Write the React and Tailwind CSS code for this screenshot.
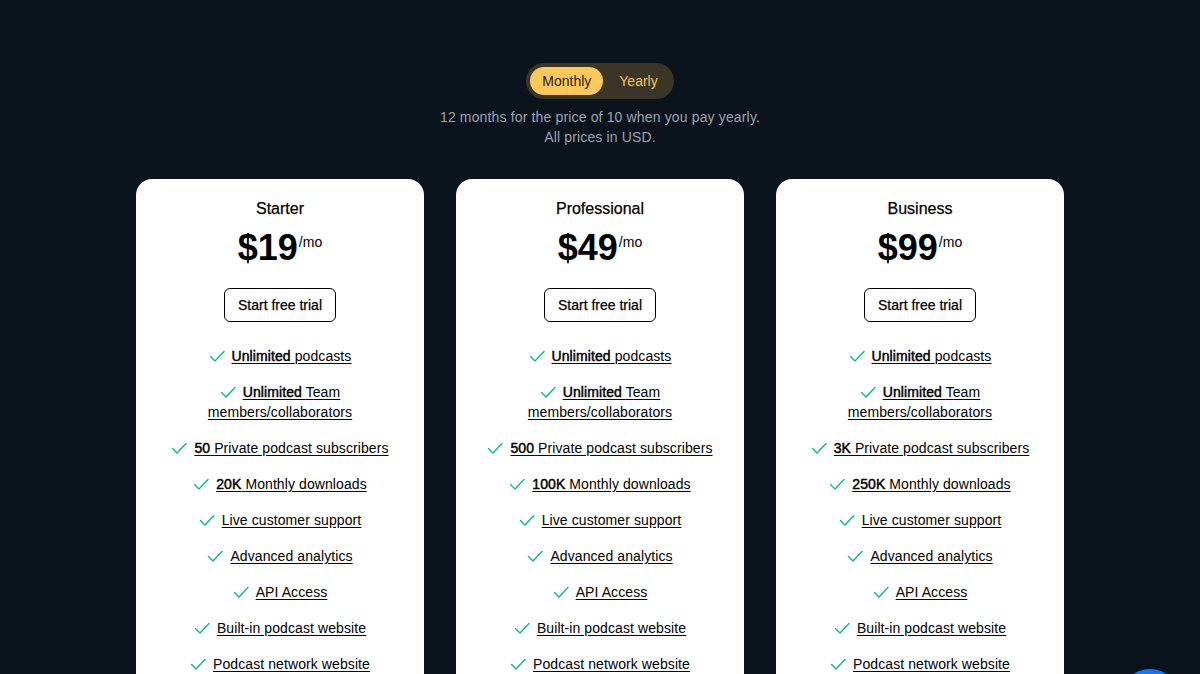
import { useState } from "react";

const PLANS = [
    { name: "Starter", price: 19, subs: "50", downloads: "20K" },
    { name: "Professional", price: 49, subs: "500", downloads: "100K" },
    { name: "Business", price: 99, subs: "3K", downloads: "250K" },
];

function CheckIcon() {
    return (
        <svg viewBox="0 0 16 16" className="inline-block w-4 h-4 mr-[7px] -mt-[3px] align-middle text-[#10b981]" fill="none" stroke="currentColor" strokeWidth="1.4" strokeLinecap="round" strokeLinejoin="round">
            <path d="M1.5 8.5 6 13 15 3.5" />
        </svg>
    );
}

function Feature({ bold, text }) {
    return (
        <li className="text-center leading-5">
            <CheckIcon />
            <span className="underline underline-offset-2">
                {bold && <span className="[-webkit-text-stroke:0.45px_black]">{bold}</span>}
                {bold ? " " : ""}{text}
            </span>
        </li>
    );
}

function PlanCard({ plan }) {
    return (
        <div className="w-[288px] bg-white rounded-2xl pt-[18px] px-7 pb-8 text-black">
            <h3 className="text-center text-base leading-6 [-webkit-text-stroke:0.25px_black]">{plan.name}</h3>
            <div className="mt-[7px] flex justify-center items-start">
                <span className="text-4xl leading-10 font-bold">${plan.price}</span>
                <span className="text-sm leading-5 mt-[4px] ml-[1px]">/mo</span>
            </div>
            <div className="mt-5 flex justify-center">
                <button className="px-[13px] py-1.5 text-sm leading-5 border border-black rounded-md [-webkit-text-stroke:0.25px_black]">Start free trial</button>
            </div>
            <ul className="mt-6 space-y-4 text-sm tracking-[0.09px]">
                <Feature bold="Unlimited" text="podcasts" />
                <Feature bold="Unlimited" text="Team members/collaborators" />
                <Feature bold={plan.subs} text="Private podcast subscribers" />
                <Feature bold={plan.downloads} text="Monthly downloads" />
                <Feature text="Live customer support" />
                <Feature text="Advanced analytics" />
                <Feature text="API Access" />
                <Feature text="Built-in podcast website" />
                <Feature text="Podcast network website" />
            </ul>
        </div>
    );
}

export default function App() {
    const [yearly, setYearly] = useState(false);

    return (
        <div className="relative min-h-[674px] bg-[#0b131d] pt-[63px] pb-16 font-['Liberation_Sans',Arial,sans-serif] overflow-hidden">
            <div className="flex justify-center">
                <div className="flex items-center p-1 rounded-full bg-[#3a3527]">
                    <button
                        onClick={() => setYearly(false)}
                        className={`h-7 px-3 rounded-full text-sm ${!yearly ? "bg-[#fcc75b] text-[#2a2310]" : "text-[#f6c35b]"}`}
                    >
                        Monthly
                    </button>
                    <button
                        onClick={() => setYearly(true)}
                        className={`h-7 pl-4 pr-3 rounded-full text-sm ${yearly ? "bg-[#fcc75b] text-[#2a2310]" : "text-[#f6c35b]"}`}
                    >
                        Yearly
                    </button>
                </div>
            </div>
            <p className="mt-2 text-center text-sm leading-5 tracking-[0.15px] text-[#9ca3af]">
                12 months for the price of 10 when you pay yearly.<br />
                All prices in USD.
            </p>
            <div className="mt-8 flex justify-center gap-8">
                {PLANS.map((p) => (
                    <PlanCard key={p.name} plan={p} />
                ))}
            </div>
            <button className="absolute left-[1120px] top-[669px] w-[60px] h-[60px] rounded-full bg-[#1a73e8]" aria-label="Chat"></button>
        </div>
    );
}
